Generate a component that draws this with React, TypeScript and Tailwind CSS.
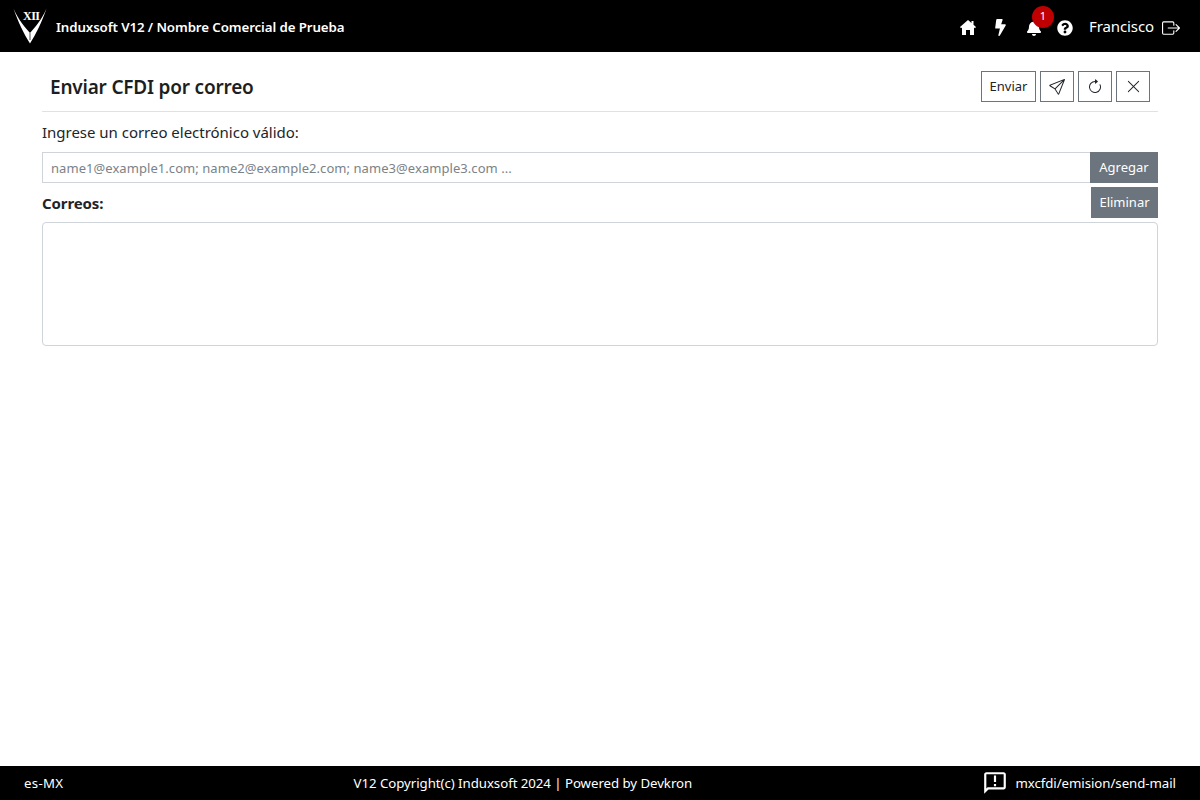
import { FaBolt, FaBell, FaQuestionCircle } from "react-icons/fa";
import { BsBoxArrowRight, BsSend, BsArrowClockwise, BsXLg } from "react-icons/bs";
import { MdOutlineAnnouncement } from "react-icons/md";

function Logo() {
  return (
    <div className="relative w-[34px] h-[36px] ml-[13px] mr-[9px] mb-[3px]">
      <svg viewBox="0 0 34 36" className="w-[34px] h-[36px]">
        <path d="M0.5 0.5 C5 14 11 26 17 35.5 C23 26 29 14 33.5 0.5 C28 13 22 19 17 25 C12 19 6 13 0.5 0.5 Z" fill="#fff" />
        <path d="M17 25 L17 32" stroke="#000" strokeWidth="0.7" />
      </svg>
      <span className="absolute left-[10px] top-[1px] text-[12px] leading-[14px] tracking-[-0.5px] font-semibold text-white font-['Liberation_Serif',serif]">XII</span>
    </div>
  );
}

function HomeIcon() {
  return (
    <svg viewBox="0 0 16 15" className="w-[16px] h-[15px] mr-[16px]" fill="#fff">
      <path d="M8 0 L11.5 3 V1 H13.5 V4.7 L16 7 L15 8.2 L14 7.4 V15 H10 V10 H6 V15 H2 V7.4 L1 8.2 L0 7 Z" />
    </svg>
  );
}

function IconBtn({ children }: { children: React.ReactNode }) {
  return (
    <button className="h-[31px] w-[34px] border border-[#6c757d] flex items-center justify-center text-[#212529] bg-white">
      {children}
    </button>
  );
}

export default function App() {
  return (
    <div className="h-[800px] w-[1200px] flex flex-col bg-white text-[#212529] font-['Noto_Sans',sans-serif] overflow-hidden">
      <header className="h-[52px] bg-black flex items-center text-white pt-[3px]">
        <Logo />
        <span className="text-[13.3px] font-semibold tracking-[-0.1px]">Induxsoft V12 / Nombre Comercial de Prueba</span>
        <div className="ml-auto flex items-center pr-[20px]">
          <HomeIcon />
          <FaBolt className="text-[17px] mr-[17px]" />
          <div className="relative mr-[15px]">
            <FaBell className="text-[16px]" />
            <span className="absolute left-[6px] top-[-14px] w-[22px] h-[22px] rounded-full bg-[#c00000] text-[11px] flex items-center justify-center">1</span>
          </div>
          <FaQuestionCircle className="text-[16px] mr-[16px]" />
          <span className="text-[15px] mr-[8px] tracking-[-0.1px] mb-[2px]">Francisco</span>
          <BsBoxArrowRight className="text-[18px]" />
        </div>
      </header>

      <main className="flex-1 px-[42px]">
        <div className="h-[60px] border-b border-[#dee2e6] flex items-center pl-[8px] pr-[8px] pt-[10px]">
          <h1 className="text-[19px] font-semibold tracking-[-0.2px] pt-[1px] text-[#1c1f22]">Enviar CFDI por correo</h1>
          <div className="ml-auto flex gap-[4px]">
            <button className="h-[31px] w-[55px] border border-[#6c757d] text-[13px] bg-white pt-[1px]">Enviar</button>
            <IconBtn><BsSend className="text-[16px]" /></IconBtn>
            <IconBtn><BsArrowClockwise className="text-[16px]" /></IconBtn>
            <IconBtn><BsXLg className="text-[15px]" /></IconBtn>
          </div>
        </div>
        <p className="text-[15px] leading-[20px] mt-[10px] mb-[10px] tracking-[-0.02px]">Ingrese un correo electrónico válido:</p>
        <div className="flex h-[31px]">
          <input
            readOnly
            placeholder="name1@example1.com; name2@example2.com; name3@example3.com ..."
            className="flex-1 h-full border border-[#ced4da] border-r-0 px-[8px] text-[13px] tracking-[0.06px] placeholder:text-[#7b8288] outline-none"
          />
          <button className="w-[68px] h-full bg-[#6c757d] text-white text-[13px] pt-[1px]">Agregar</button>
        </div>
        <div className="flex items-center justify-between h-[31px] mt-[4px]">
          <span className="text-[15px] font-bold tracking-[-0.1px] pt-[1px]">Correos:</span>
          <button className="w-[67px] h-full bg-[#6c757d] text-white text-[13px] pt-[1px]">Eliminar</button>
        </div>
        <div className="h-[124px] mt-[4px] border border-[#ced4da] rounded-[4px]" />
      </main>

      <footer className="h-[34px] bg-black text-white flex items-center justify-between pl-[24px] pr-[24px] text-[13.25px] tracking-[-0.05px]">
        <span className="pt-[1px] tracking-[0.3px]">es-MX</span>
        <span className="pt-[1px]">V12 Copyright(c) Induxsoft 2024 | Powered by Devkron</span>
        <span className="flex items-center">
          <MdOutlineAnnouncement className="text-[26px] mr-[7px]" />
          <span className="pt-[1px]">mxcfdi/emision/send-mail</span>
        </span>
      </footer>
    </div>
  );
}
